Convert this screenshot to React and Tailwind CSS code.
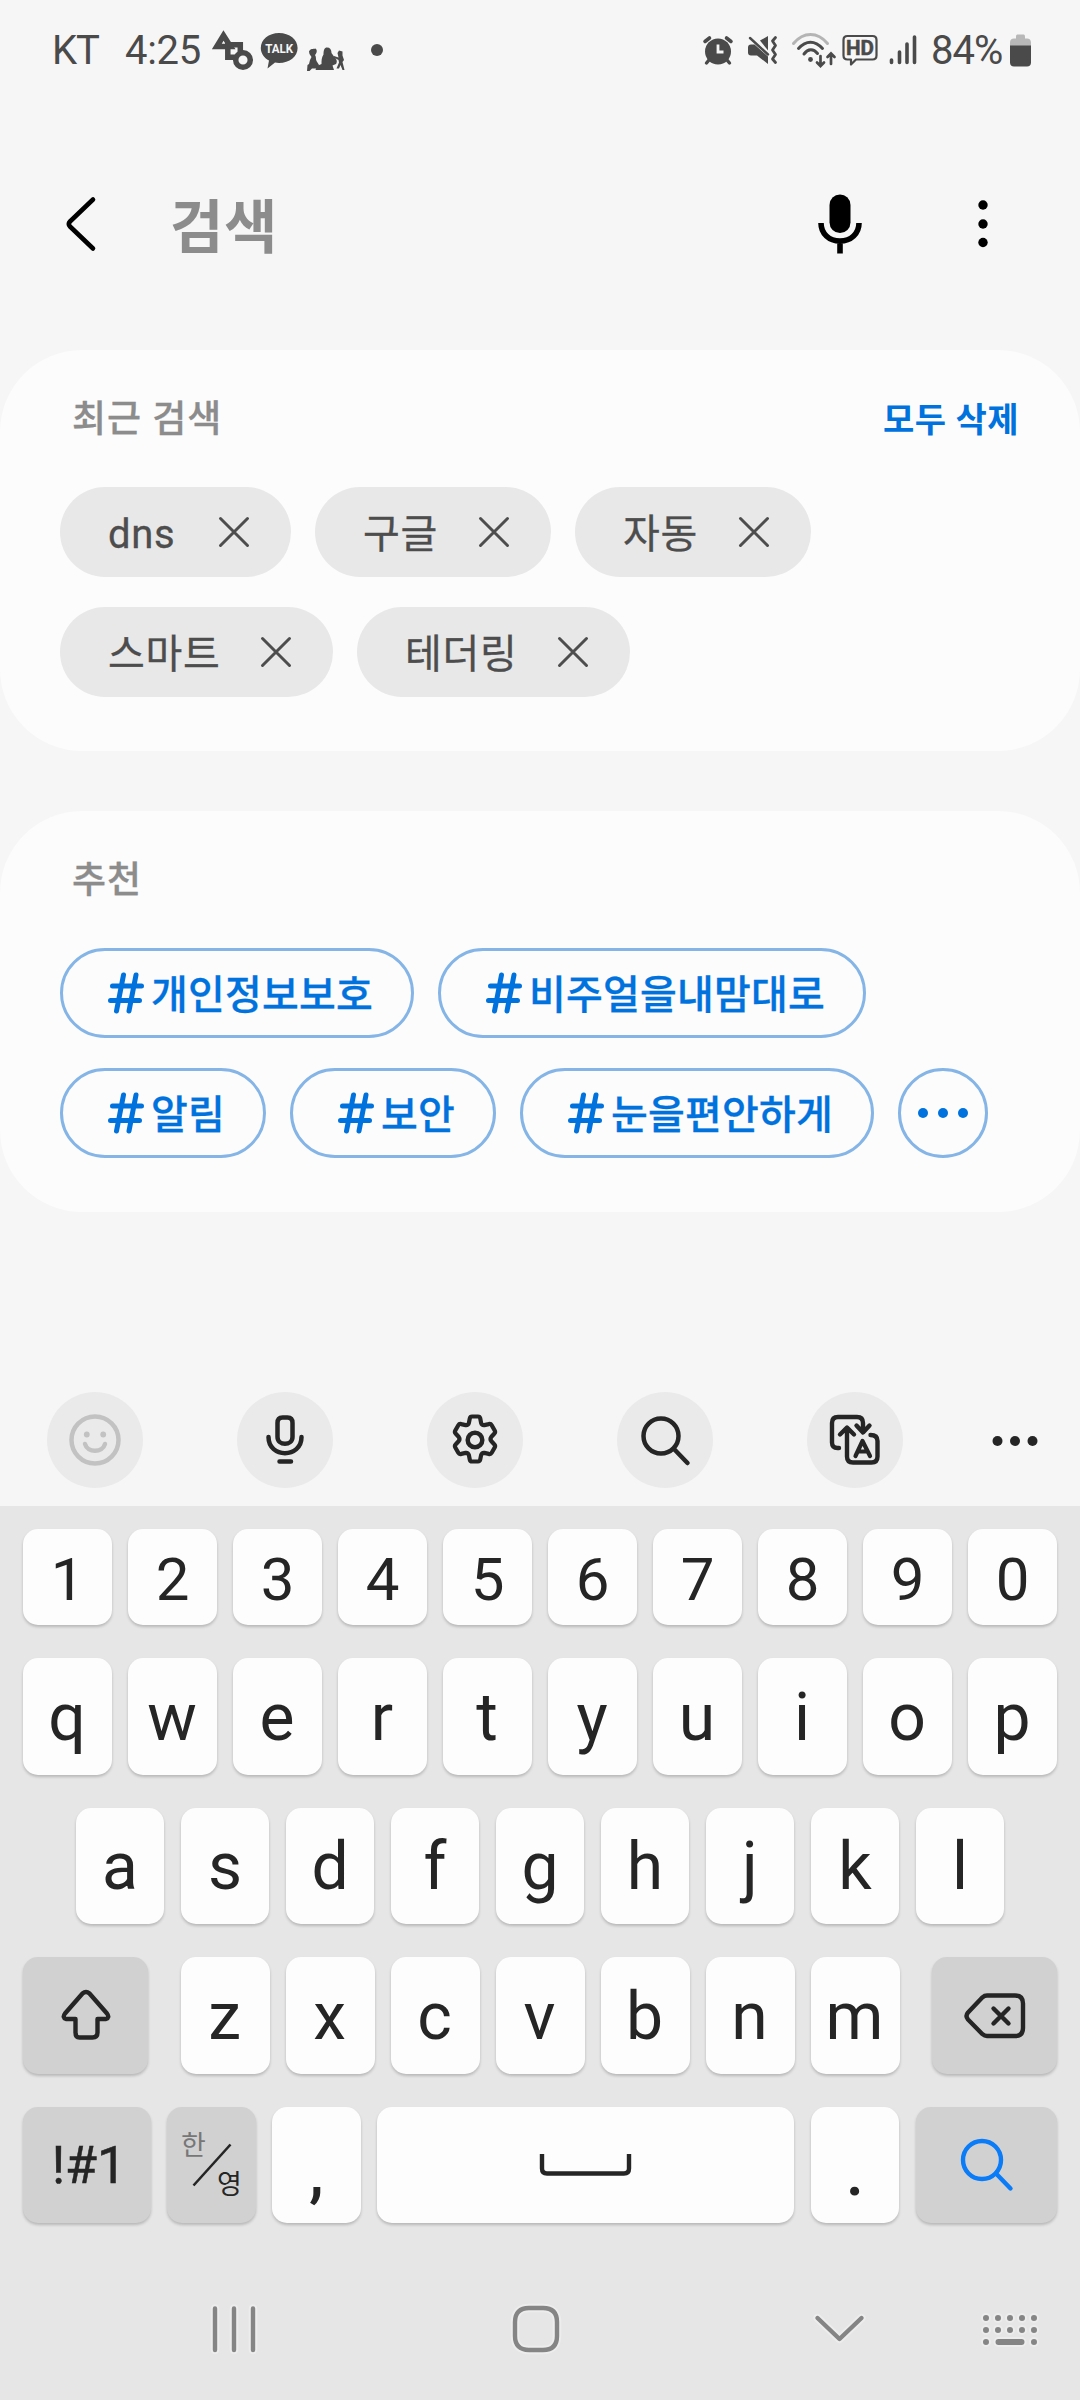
import clsx from 'clsx';

const recent = [
  [
    { label: 'dns', width: 'w-[231px]' },
    { label: '구글', width: 'w-[236px]' },
    { label: '자동', width: 'w-[236px]' },
  ],
  [
    { label: '스마트', width: 'w-[273px]' },
    { label: '테더링', width: 'w-[273px]' },
  ],
];

const suggestions = [
  [
    { label: '개인정보보호', width: 'w-[354px]' },
    { label: '비주얼을내맘대로', width: 'w-[428px]' },
  ],
  [
    { label: '알림', width: 'w-[206px]' },
    { label: '보안', width: 'w-[206px]' },
    { label: '눈을편안하게', width: 'w-[354px]' },
  ],
];

function StatusBar() {
  return (
    <div className="flex h-[100px] items-center justify-between pr-[49px] pl-[52px] text-[40px] leading-none text-[#4a4a4a]">
      <div className="flex items-center">
        <span className="w-[73px] pt-[1px] tracking-[-1px]">KT</span>
        <span className="w-[87px] pt-[1px] tracking-[-0.3px]">4:25</span>
        {/* shapes */}
        <svg width="42" height="42" viewBox="0 0 42 42" fill="none" stroke="currentColor" strokeWidth="5.5">
          <path d="M11.5 6.5 4.8 17.5H18.5Z" />
          <path d="M15.8 15.8H28.3V28.3H15.8Z" />
          <circle cx="31" cy="31" r="7.3" fill="#f6f6f6" />
        </svg>
        {/* talk bubble */}
        <svg className="ml-[6px]" width="40" height="42" viewBox="0 0 40 42">
          <path
            d="M19 4C29.5 4 37.6 10.5 37.6 19S29.5 34 19 34c-1.5 0-2.8-.2-4-.4L7.5 39.5 9 31.5C4 28.8.8 24.3.8 19 .8 10.5 8.8 4 19 4Z"
            fill="currentColor"
          />
          <text x="19.2" y="24" textAnchor="middle" fontSize="13.5" fontWeight="700" fill="#f6f6f6" textLength="28" lengthAdjust="spacingAndGlyphs">
            TALK
          </text>
        </svg>
        {/* people */}
        <svg className="ml-[6px]" width="40" height="42" viewBox="0 0 40 42" fill="currentColor">
          <path d="M3 22.5C4.5 19.5 7 20 9.5 19.5 11.5 21 11 24 9 26c1.5 2 .5 4 1.500 6L13 36 12 39.5H6L3.500 42H1L1.500 36 3 35 4 31 5.500 28 3.500 25Z" />
          <path d="M21 18.500c3 0 4.500 2 4.500 5.500L28 27.500c3 2.500 3.500 5.500 2 7.500l-3.500 1.500 1.500 4.500H9.500l1.500-4 4.500-2c0-4 0-6.500 2-9.500 0-4.500 1-7 3.500-7Z" />
          <path d="M33 21.500 36.500 22.500 36.500 26.500 38 31 36.500 33 38.500 41 36.500 41 34.500 36 33 39.500 30.500 39.500 33 33.500 32.500 31 28 28.500 28 27 32.500 28.500 31.500 24Z" />
        </svg>
        <span className="ml-[25px] size-[12px] rounded-full bg-[#4a4a4a]" />
      </div>

      <div className="flex items-center">
        {/* alarm */}
        <svg width="32" height="32" viewBox="0 0 32 32" fill="none" stroke="currentColor" strokeLinecap="round">
          <circle cx="16" cy="17.5" r="13" fill="currentColor" stroke="none" />
          <path d="M3 7.5 7.5 4M29 7.5 24.5 4" strokeWidth="3.6" />
          <path d="m7 26-2.500 3M25 26l2.500 3" strokeWidth="3.4" />
          <path d="M16 10.500V18H21.500" stroke="#f6f6f6" strokeWidth="2.8" strokeLinecap="butt" />
        </svg>
        {/* muted + vibrate */}
        <svg className="ml-[13px]" width="32" height="32" viewBox="0 0 32 32" fill="currentColor">
          <path d="M13 6.500 21 2v14.500Z" />
          <path d="M1 13.500c0-2 1-3 3-3h3.500L21 22.500V30L10 21.500H4c-2 0-3-1-3-3Z" />
          <path d="M3 4 21 20.500" stroke="currentColor" strokeWidth="2.4" strokeLinecap="round" />
          <path d="M28.500 3.500 25.500 7l3 4.500-3 4.500 3 4.500-3 4.500 3 3.500" fill="none" stroke="currentColor" strokeWidth="2.8" strokeLinecap="round" strokeLinejoin="round" />
        </svg>
        {/* wifi */}
        <svg className="ml-[12px]" width="46" height="38" viewBox="0 0 46 38" fill="none" stroke="currentColor" strokeWidth="3" strokeLinecap="round">
          <path d="M2.500 12.500C12.500.5 26.500.5 36.500 12.500" stroke="#b4b4b4" />
          <path d="M7.500 17.500c7.500-8.500 16.500-8.500 24 0M13 23c4-5.500 9.500-5.500 13.500-.5" />
          <circle cx="19.5" cy="28.5" r="2.4" fill="currentColor" stroke="none" />
          <path d="M29.500 25v9.500M26 31.500l3.500 3.500 3.500-3.500M40 33v-9M36.500 26l3.500-3.500 3.500 3.500" strokeWidth="2.7" />
        </svg>
        {/* HD voice */}
        <svg className="ml-[5px]" width="36" height="34" viewBox="0 0 36 34">
          <path d="M5.500 3H30.500c2.500 0 4 1.500 4 4V22.500c0 2.500-1.500 4-4 4H14L9 31.500V26.500H5.500c-2.500 0-4-1.500-4-4V7C1.500 4.500 3 3 5.500 3Z" fill="none" stroke="currentColor" strokeWidth="2.2" strokeLinejoin="round" />
          <text x="18" y="22.3" textAnchor="middle" fontSize="21" fontWeight="700" fill="currentColor" stroke="currentColor" strokeWidth="0.5" textLength="28" lengthAdjust="spacingAndGlyphs">
            HD
          </text>
        </svg>
        {/* signal */}
        <svg className="ml-[10px]" width="30" height="30" viewBox="0 0 30 30" stroke="currentColor" strokeWidth="3.6" strokeLinecap="round">
          <path d="M3.500 25v2.500M11.500 17v10.500M19 9v18.500M26.500 2v25.500" />
        </svg>
        <span className="ml-[13px] w-[79px] pt-[1px] tracking-[-1px]">84%</span>
        {/* battery */}
        <svg width="21" height="33" viewBox="0 0 21 33" fill="currentColor">
          <path d="M6 3c0-2 .5-2.500 2-2.500h5c1.500 0 2 .5 2 2.500v1.500h2c2.500 0 4 1.500 4 4V12H0V8.500c0-2.500 1.500-4 4-4h2Z" fill="#b8b8b8" />
          <path d="M0 11.500H21V28.500c0 2.500-1.500 4-4 4H4c-2.500 0-4-1.500-4-4Z" />
        </svg>
      </div>
    </div>
  );
}

function Header() {
  return (
    <div className="flex h-[250px] items-start px-[60px] pt-[94px]">
      <svg width="44" height="60" viewBox="0 0 44 60" fill="none" stroke="#000" strokeWidth="4.6" strokeLinecap="round" strokeLinejoin="round">
        <path d="M33 5.500 10 27.500Q7.500 30 10 32.500L33 54.500" />
      </svg>
      <h1 className="ml-[66px] pt-[4px] text-[58px] leading-[60px] font-bold tracking-[0.6px] text-[#8c8c8c]">검색</h1>
      <svg className="ml-auto" width="46" height="62" viewBox="0 0 46 62" fill="none" stroke="#000" strokeWidth="5.6">
        <rect x="12.5" y="0.5" width="21" height="38.5" rx="10.5" fill="#000" stroke="none" />
        <path d="M4 29c0 10.500 8 18 19 18s19-7.500 19-18M23 47V59.500" />
      </svg>
      <svg className="mr-[31px] ml-[114px]" width="12" height="60" viewBox="0 0 12 60">
        <circle cx="6" cy="11" r="4.7" />
        <circle cx="6" cy="30" r="4.7" />
        <circle cx="6" cy="48.5" r="4.7" />
      </svg>
    </div>
  );
}

function RecentChip({ label, width }) {
  return (
    <div className={clsx('flex h-[90px] items-center justify-between rounded-full bg-[#e8e8e8] pr-[41px] pl-[48px]', width)}>
      <span className="pt-[6px] text-[40px] leading-none tracking-[0.7px] text-[#4d4d4d] [-webkit-text-stroke:0.3px_#4d4d4d]">{label}</span>
      <svg width="32" height="32" viewBox="0 0 32 32" stroke="#4d4d4d" strokeWidth="3" strokeLinecap="round">
        <path d="M2.500 2.500 29.500 29.500M29.500 2.500 2.500 29.500" />
      </svg>
    </div>
  );
}

function TagChip({ label, width }) {
  return (
    <div className={clsx('flex h-[90px] items-center rounded-full border-[3px] border-[#85b5e6] pl-[45px] text-[#0072de]', width)}>
      <svg width="37" height="42" viewBox="0 0 37 42" fill="none" stroke="currentColor" strokeWidth="5" strokeLinecap="round">
        <path d="M4.500 14H33.500M2.500 28.500H31.500M15.500 3 8.500 39M28 3 21 39" />
      </svg>
      <span className="ml-[6px] pt-[6px] text-[40px] leading-none font-medium tracking-[0.2px] whitespace-nowrap [-webkit-text-stroke:0.3px_#0072de]">
        {label}
      </span>
    </div>
  );
}

function ToolButton({ children, muted }) {
  return (
    <div className={clsx('flex size-[96px] items-center justify-center rounded-full bg-[#eaeaea]', muted ? 'text-[#c2c2c2]' : 'text-[#252525]')}>
      <svg width="60" height="60" viewBox="0 0 60 60" fill="none" stroke="currentColor" strokeWidth="4.5" strokeLinecap="round" strokeLinejoin="round">
        {children}
      </svg>
    </div>
  );
}

function Toolbar() {
  return (
    <div className="flex h-[114px] items-start gap-[94px] pl-[47px]">
      <ToolButton muted>
        <circle cx="30" cy="30" r="23.5" />
        <path d="M20 34c2.500 9 17.500 9 20 0" />
        <circle cx="21.8" cy="24.5" r="2.9" fill="currentColor" stroke="none" />
        <circle cx="38.2" cy="24.5" r="2.9" fill="currentColor" stroke="none" />
      </ToolButton>
      <ToolButton>
        <path d="M22.500 13q0-5.500 5-5.500h5q5 0 5 5.500V27c0 9-15 9-15 0Z" />
        <path d="M13.500 27c0 21.500 33 21.500 33 0M24.500 51.500H36" />
      </ToolButton>
      <ToolButton>
        <circle cx="30" cy="30" r="7.3" />
        <path d="M27 6.500h6q1.800 0 2.200 1.800l.9 4.500q.8 2.600 3.300 2.300l4.300-1q2-.6 3 1.200l3 5.200q1 1.800-.5 3.200l-2.800 3q-1.800 2.300 0 4.600l2.800 3q1.500 1.400.5 3.200l-3 5.200q-1 1.800-3 1.200l-4.300-1q-2.500-.3-3.300 2.300l-.9 4.500q-.4 1.800-2.200 1.800h-6q-1.800 0-2.200-1.800l-.9-4.500q-.8-2.600-3.300-2.300l-4.300 1q-2 .6-3-1.200l-3-5.200q-1-1.800.5-3.200l2.800-3q1.800-2.300 0-4.600l-2.800-3q-1.500-1.400-.5-3.200l3-5.200q1-1.800 3-1.200l4.300 1q2.500.3 3.300-2.300l.9-4.500Q25.200 6.500 27 6.500Z" strokeWidth="4.2" />
      </ToolButton>
      <ToolButton>
        <circle cx="26" cy="26" r="17.5" />
        <path d="M39 39 52.500 53" />
      </ToolButton>
      <ToolButton>
        <path d="M14 38h-1.500Q7 38 7 32.500V13Q7 7 13 7H32q6 0 6 6v7M31.500 15.500l6.500 7 6.500-7" strokeWidth="4.4" />
        <path d="M15 24.500 22 17.500l7 7M22 19V46.500q0 6 6 6H46.500q6 0 6-6V31q0-6-7-6" strokeWidth="4.4" />
        <path d="M30.500 46 37.500 31 45 46M33 41.500H42.500" strokeWidth="4.2" />
      </ToolButton>
      <svg className="-ml-[6px]" width="48" height="96" viewBox="0 0 48 96" fill="#252525">
        <circle cx="6.5" cy="49" r="5" />
        <circle cx="24" cy="49" r="5" />
        <circle cx="41.5" cy="49" r="5" />
      </svg>
    </div>
  );
}

function Key({ children, dark, className }) {
  return (
    <div
      className={clsx(
        'flex items-center justify-center rounded-[15px] leading-none shadow-[0_2px_3px_rgba(0,0,0,0.2)]',
        dark ? 'bg-[#d1d1d1]' : 'bg-[#fdfdfd]',
        className
      )}
    >
      {children}
    </div>
  );
}

function Keyboard() {
  return (
    <div className="h-[894px] bg-[#e6e6e6] pt-[23px] text-[#252525]">
      <div className="flex gap-[16px] pl-[23px] text-[60px]">
        {[...'1234567890'].map((k) => (
          <Key key={k} className="h-[96px] w-[89px] pt-[6px]">{k}</Key>
        ))}
      </div>
      <div className="mt-[33px] flex gap-[16px] pl-[23px] text-[66px]">
        {[...'qwertyuiop'].map((k) => (
          <Key key={k} className="h-[117px] w-[89px] pt-[3px] pr-[1px]">{k}</Key>
        ))}
      </div>
      <div className="mt-[33px] flex gap-[17px] pl-[76px] text-[66px]">
        {[...'asdfghjkl'].map((k) => (
          <Key key={k} className="h-[116px] w-[88px] pt-[2px]">{k}</Key>
        ))}
      </div>
      <div className="mt-[33px] flex justify-between pr-[23px] pl-[23px] text-[66px]">
        <Key dark className="h-[117px] w-[125px]">
          <svg width="56" height="56" viewBox="0 0 56 56" fill="none" stroke="currentColor" strokeWidth="4.4" strokeLinejoin="round">
            <path d="M24.500 5.500Q28 2.500 31.500 5.500L49 25.500Q52 29.500 48 31H39.500V44.500q0 5-5 5H21.500q-4 0-4-5V31H8Q4 29.500 7 25.500Z" />
          </svg>
        </Key>
        <div className="flex gap-[16px]">
          {[...'zxcvbnm'].map((k) => (
            <Key key={k} className="h-[117px] w-[89px] pt-[2px] pr-[1px]">{k}</Key>
          ))}
        </div>
        <Key dark className="h-[117px] w-[125px]">
          <svg width="64" height="50" viewBox="0 0 64 50" fill="none" stroke="currentColor" strokeWidth="4.4" strokeLinecap="round" strokeLinejoin="round">
            <path d="M24 4.500H52q8 0 8 8V37q0 8-8 8H24q-2.500 0-4.500-1.800L5 28.500q-3-3.500 0-7L19.500 6.300Q21.500 4.500 24 4.500Z" />
            <path d="m30.500 17.500 15 15M45.500 17.500l-15 15" />
          </svg>
        </Key>
      </div>
      <div className="mt-[33px] flex gap-[16px] pl-[23px] text-[66px]">
        <Key dark className="h-[116px] w-[128px] pt-[2px] pl-[4px] text-[52px] [-webkit-text-stroke:0.5px_#252525]">!#1</Key>
        <Key dark className="relative h-[116px] w-[89px] text-[27px]">
          <span className="absolute top-[26px] left-[14px] text-[#777]">한</span>
          <svg width="89" height="116" viewBox="0 0 89 116" stroke="currentColor" strokeWidth="2.6">
            <path d="M26.500 78.500 63.500 37.500" />
          </svg>
          <span className="absolute top-[65px] left-[50px]">영</span>
        </Key>
        <Key className="h-[116px] w-[89px] pt-[16px] font-medium">,</Key>
        <Key className="h-[116px] w-[417px]">
          <svg width="96" height="28" viewBox="0 0 96 28" fill="none" stroke="currentColor" strokeWidth="4.4">
            <path d="M4 3V17.500q0 5 5 5H86q5 0 5-5V3" />
          </svg>
        </Key>
        <Key className="ml-[1px] h-[116px] w-[88px] pt-[16px] font-medium">.</Key>
        <Key dark className="ml-[1px] h-[116px] w-[141px]">
          <svg width="56" height="56" viewBox="0 0 56 56" fill="none" stroke="#0a7cf8" strokeWidth="4.4" strokeLinecap="round">
            <circle cx="23" cy="23" r="19" />
            <path d="M37 36.500 51.500 51.500" />
          </svg>
        </Key>
      </div>
      <NavBar />
    </div>
  );
}

// Every glyph is stroked twice: a pale halo below, the gray line above
function NavGlyph({ width, className, d }) {
  return (
    <svg className={className} width={width} height="60" viewBox={`0 0 ${width} 60`} fill="none" strokeLinecap="round" strokeLinejoin="round">
      <path d={d} stroke="#ededed" strokeWidth="8.5" />
      <path d={d} stroke="#858585" strokeWidth="4.4" />
    </svg>
  );
}

function NavBar() {
  const dots = [6, 18, 30, 42, 54];
  const rows = [19, 31];
  return (
    <div className="mt-[76px] flex items-center pl-[204px]">
      <NavGlyph width={60} d="M11 9.500V51M30 9.500V51M49 9.500V51" />
      <NavGlyph width={60} className="ml-[242px]" d="M23 9H37Q51 9 51 23V37Q51 51 37 51H23Q9 51 9 37V23Q9 9 23 9Z" />
      <NavGlyph width={60} className="ml-[243px]" d="M8.500 19 30.500 40 52.500 19" />
      <svg className="ml-[111px]" width="60" height="60" viewBox="0 0 60 60" fill="#858585" stroke="#ededed" strokeWidth="2">
        {rows.map((y) => dots.map((x) => <circle key={`${x}-${y}`} cx={x} cy={y} r="4" />))}
        <circle cx="6" cy="43" r="4" />
        <rect x="14.5" y="39" width="31" height="8" rx="4" />
        <circle cx="54" cy="43" r="4" />
      </svg>
    </div>
  );
}

export default function App() {
  return (
    <div lang="ko" className="flex h-[2400px] w-[1080px] flex-col overflow-hidden bg-[#f6f6f6] [font-family:Roboto,'Noto_Sans_CJK_KR',sans-serif]">
      <StatusBar />
      <Header />

      <section className="h-[401px] rounded-[82px] bg-[#fcfcfc] px-[60px] pt-[44px]">
        <div className="flex h-[93px] items-start justify-between pr-[1px] pl-[12px]">
          <h2 className="pt-[4px] text-[37px] leading-[44px] font-medium tracking-[1px] text-[#8c8c8c] [-webkit-text-stroke:0.3px_#8c8c8c]">최근 검색</h2>
          <span className="pt-[4px] text-[34px] leading-[44px] font-bold tracking-[0.5px] text-[#0072de]">모두 삭제</span>
        </div>
        <div className="flex flex-col gap-[30px]">
          {recent.map((row, i) => (
            <div key={i} className="flex gap-[24px]">
              {row.map((chip) => <RecentChip key={chip.label} {...chip} />)}
            </div>
          ))}
        </div>
      </section>

      <section className="mt-[60px] h-[401px] rounded-[82px] bg-[#fcfcfc] px-[60px] pt-[44px]">
        <div className="flex h-[93px] items-start pl-[12px]">
          <h2 className="pt-[4px] text-[37px] leading-[44px] font-medium tracking-[1px] text-[#8c8c8c] [-webkit-text-stroke:0.3px_#8c8c8c]">추천</h2>
        </div>
        <div className="flex flex-col gap-[30px]">
          {suggestions.map((row, i) => (
            <div key={i} className="flex gap-[24px]">
              {row.map((chip) => <TagChip key={chip.label} {...chip} />)}
              {i === suggestions.length - 1 && (
                <div className="flex size-[90px] items-center justify-center gap-[10px] rounded-full border-[3px] border-[#85b5e6]">
                  <span className="size-[10px] rounded-full bg-[#0072de]" />
                  <span className="size-[10px] rounded-full bg-[#0072de]" />
                  <span className="size-[10px] rounded-full bg-[#0072de]" />
                </div>
              )}
            </div>
          ))}
        </div>
      </section>

      <div className="mt-auto">
        <Toolbar />
        <Keyboard />
      </div>
    </div>
  );
}
